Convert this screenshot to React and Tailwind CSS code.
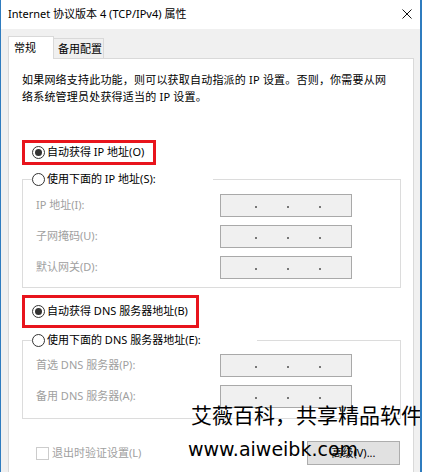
function Radio({ checked }) {
  return (
    <span className="w-[13px] h-[13px] rounded-full border border-[#333333] bg-white flex items-center justify-center shrink-0">
      {checked && <span className="w-[7px] h-[7px] rounded-full bg-[#333333]" />}
    </span>
  );
}

function IpBox() {
  return (
    <div className="w-[132px] h-[23px] bg-[#f0f0f0] border border-[#a9a9a9] flex items-center pl-[34px] gap-[30px]">
      <span className="w-[2px] h-[2px] bg-[#777777] mt-[2px]" />
      <span className="w-[2px] h-[2px] bg-[#777777] mt-[2px]" />
      <span className="w-[2px] h-[2px] bg-[#777777] mt-[2px]" />
    </div>
  );
}

function Row({ label }) {
  return (
    <div className="flex items-center h-[23px]">
      <span className="w-[188px] pl-[4px] text-[#a0a0a0] whitespace-nowrap">{label}</span>
      <IpBox />
    </div>
  );
}

export default function App() {
  return (
    <div className="relative w-[422px] h-[472px] overflow-hidden bg-[#f0f0f0] border-l border-r-2 border-[#2f7cbf] text-[11px] text-black font-['Noto_Sans','Noto_Sans_CJK_SC',sans-serif]">
      {/*---- Title bar ----*/}
      <div className="h-[29px] bg-white flex items-center justify-between pl-[7px] pr-[8px]">
        <span className="text-[11px] whitespace-nowrap">Internet 协议版本 4 (TCP/IPv4) 属性</span>
        <svg width="10" height="10" viewBox="0 0 10 10" className="mb-[1px]">
          <path d="M0.5 0.5 L9.5 9.5 M9.5 0.5 L0.5 9.5" stroke="#111" strokeWidth="1" />
        </svg>
      </div>

      {/*---- Tabs ----*/}
      <div className="flex items-end pl-[7px] mt-[7px]">
        <div className="relative z-10 w-[46px] h-[23px] -mb-px bg-white border border-b-0 border-[#d9d9d9] pl-[5px] pt-[3px]">
          常规
        </div>
        <div className="-ml-px w-[51px] h-[20px] bg-[#f0f0f0] border border-b-0 border-[#d9d9d9] pl-[4px] pt-[2px]">
          备用配置
        </div>
      </div>

      {/*---- Panel ----*/}
      <div className="ml-[7px] w-[406px] h-[420px] bg-white border border-[#d9d9d9] pl-[13px] pt-[12px]">
        <div className="leading-[17px] whitespace-nowrap tracking-[0.2px]">
          <div>如果网络支持此功能，则可以获取自动指派的 IP 设置。否则，你需要从网</div>
          <div>络系统管理员处获得适当的 IP 设置。</div>
        </div>

        {/*---- IP ----*/}
        <div className="mt-[35px] w-[134px] h-[25px] border-[3px] border-[#e8141c] flex items-center pl-[7px] gap-[2px]">
          <Radio checked />
          <span className="whitespace-nowrap">自动获得 IP 地址(O)</span>
        </div>

        <fieldset className="mt-[5px] w-[379px] border border-[#dcdcdc] px-[9px] pt-[6px] pb-[8px]">
          <legend className="w-[181px] h-[18px] flex items-center gap-[2px]">
            <Radio />
            <span className="whitespace-nowrap">使用下面的 IP 地址(S):</span>
          </legend>
          <div className="flex flex-col gap-[8px]">
            <Row label="IP 地址(I):" />
            <Row label="子网掩码(U):" />
            <Row label="默认网关(D):" />
          </div>
        </fieldset>

        {/*---- DNS ----*/}
        <div className="mt-[7px] w-[177px] h-[33px] border-[3px] border-[#e8141c] flex items-center pl-[7px] gap-[2px]">
          <Radio checked />
          <span className="whitespace-nowrap">自动获得 DNS 服务器地址(B)</span>
        </div>

        <fieldset className="mt-[3px] w-[379px] border border-[#dcdcdc] px-[9px] pt-[5px] pb-[10px]">
          <legend className="w-[225px] h-[18px] flex items-center gap-[2px]">
            <Radio />
            <span className="whitespace-nowrap">使用下面的 DNS 服务器地址(E):</span>
          </legend>
          <div className="flex flex-col gap-[8px]">
            <Row label="首选 DNS 服务器(P):" />
            <Row label="备用 DNS 服务器(A):" />
          </div>
        </fieldset>

        {/*---- Bottom row ----*/}
        <div className="mt-[22px] w-[378px] h-[24px] flex items-center justify-between pl-[14px]">
          <div className="flex items-center gap-[3px] text-[#a0a0a0]">
            <span className="w-[13px] h-[13px] border border-[#cccccc] bg-white" />
            <span className="whitespace-nowrap">退出时验证设置(L)</span>
          </div>
          <div className="w-[93px] h-[24px] bg-[#e1e1e1] border border-[#adadad] flex items-center justify-center">
            高级(V)...
          </div>
        </div>
      </div>

      {/*---- Watermark ----*/}
      <div className="absolute left-[190px] top-[401px] text-[21px] leading-[26px] text-black whitespace-nowrap font-['Noto_Sans_CJK_SC',sans-serif]">
        艾薇百科，共享精品软件
      </div>
      <div className="absolute left-[187px] top-[437px] text-[19px] leading-[24px] text-black whitespace-nowrap font-['DejaVu_Sans',sans-serif]">
        www.aiweibk.com
      </div>
    </div>
  );
}
